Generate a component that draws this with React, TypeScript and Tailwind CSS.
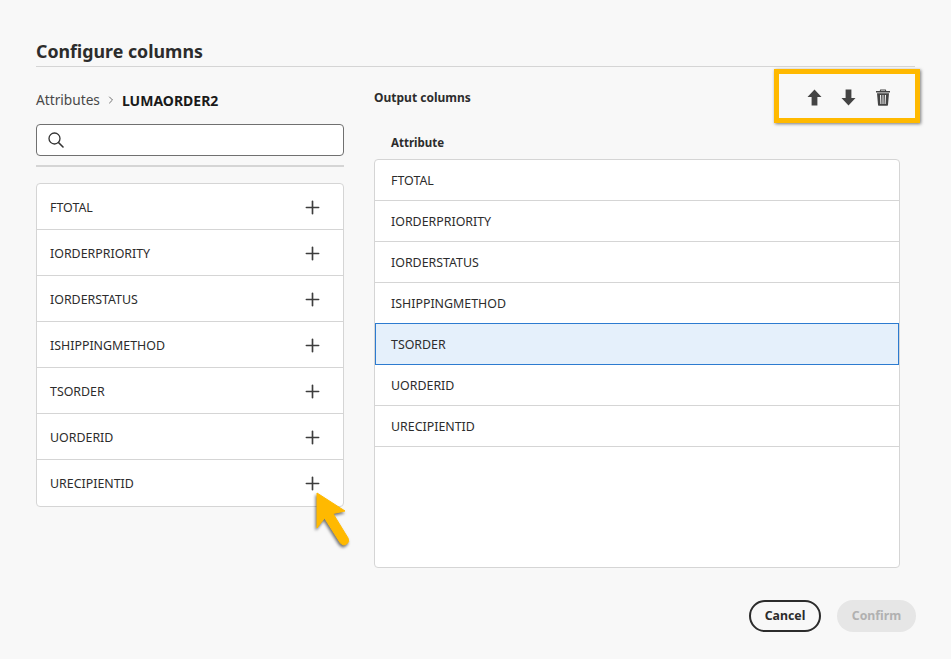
import { ChevronRight, Plus } from "lucide-react";

const attributes = [
  "FTOTAL",
  "IORDERPRIORITY",
  "IORDERSTATUS",
  "ISHIPPINGMETHOD",
  "TSORDER",
  "UORDERID",
  "URECIPIENTID",
];

const SearchIcon = () => (
  <svg width="16" height="16" viewBox="0 0 16 16" fill="none" stroke="#333" strokeWidth="1.3">
    <circle cx="6.5" cy="6.5" r="5.5" />
    <path d="M10.5 10.5 15 15" strokeLinecap="round" strokeWidth="1.6" />
  </svg>
);

const TrashIcon = () => (
  <svg width="16" height="17" viewBox="0 0 16 17" fill="#444">
    <path d="M5.2 0.6h5.6l.5 1.4h3.7v1.5H1V2h3.7zM6 1.5 5.8 2h4.4L10 1.5z" />
    <path d="M2 4.2h12l-1 11.6c0 .6-.5 1-1 1H4c-.5 0-1-.4-1-1zM5 6l.4 9h1L6.1 6zM7.5 6v9h1V6zM9.9 6l-.3 9h1l.4-9z" fillRule="evenodd" />
  </svg>
);

const UpIcon = () => (
  <svg width="15" height="17" viewBox="0 0 15 17" fill="#444">
    <path d="M7.5 0.5 14.5 8H10.4v8.5H4.6V8H.5z" />
  </svg>
);

const DownIcon = () => (
  <svg width="15" height="17" viewBox="0 0 15 17" fill="#444">
    <path d="M7.5 16.5 14.5 9H10.4V.5H4.6V9H.5z" />
  </svg>
);

const App = () => {
  return (
    <div className="relative flex h-[659px] w-[951px] flex-col overflow-hidden bg-[#f8f8f8] px-9 font-['Noto_Sans',sans-serif] text-[#2c2c2c]">
      <h1 className="mt-[38px] h-[29px] border-b border-[#d5d5d5] text-[17.8px] leading-[26px] font-bold">
        Configure columns
      </h1>

      <div className="flex">
        <div className="w-[308px]">
          <div className="mt-[23px] flex h-[20px] items-center text-[13.7px] text-[#484848]">
            <span>Attributes</span>
            <ChevronRight size={12} className="mx-[5px] text-[#707070]" />
            <span className="text-[14px] font-bold text-[#1a1a1a]">LUMAORDER2</span>
          </div>
          <div className="mt-[14px] flex h-[32px] items-center rounded-[4px] border border-[#707070] bg-white pl-[11px]">
            <SearchIcon />
          </div>
          <div className="mt-[9px] h-[2px] bg-[#d5d5d5]" />
          <ul className="mt-[16px] rounded-[4px] border border-[#d5d5d5] bg-white">
            {attributes.map((name, idx) => (
              <li
                key={name}
                className={`flex h-[46px] items-center justify-between border-b pt-[2px] pr-[20px] pl-[13px] text-[12.4px] ${
                  idx < attributes.length - 1 ? "border-[#d5d5d5]" : "border-transparent"
                }`}
              >
                <span className="mt-[1px]">{name}</span>
                <Plus size={21} strokeWidth={1.9} className="text-[#3d3d3d]" />
              </li>
            ))}
          </ul>
        </div>

        <div className="ml-[30px] w-[526px]">
          <div className="mt-[21px] h-[20px] text-[12px] leading-[20px] font-bold">Output columns</div>
          <div className="mt-[25px] h-[20px] pl-[17px] text-[11.5px] leading-[20px] font-bold">Attribute</div>
          <ul className="mt-[6px] h-[409px] rounded-[4px] border border-[#d5d5d5] bg-white">
            {attributes.map((name) => (
              <li
                key={name}
                className={
                  name === "TSORDER"
                    ? "-mt-px flex h-[42px] items-center border border-[#2c7bd0] bg-[#e5f0fb] pt-[3px] pl-[15px] text-[12.4px]"
                    : "flex h-[41px] items-center border-b border-[#d5d5d5] pt-[3px] pl-[16px] text-[12.4px]"
                }
              >
                {name}
              </li>
            ))}
          </ul>
        </div>
      </div>

      <div className="mt-[32px] -mr-px flex justify-end gap-4">
        <button className="h-[32px] w-[72px] rounded-full border-2 border-[#2c2c2c] text-[12.3px] font-bold">
          Cancel
        </button>
        <button className="h-[32px] w-[79px] rounded-full bg-[#e6e6e6] text-[12.3px] font-bold text-[#b1b1b1]">
          Confirm
        </button>
      </div>

      <div className="absolute top-[69px] left-[774px] flex h-[54px] w-[146px] items-center gap-[19px] border-[5px] border-[#ffb900] pt-[2px] pl-[28px] shadow-[1px_1px_3px_rgba(0,0,0,0.5)]">
        <UpIcon />
        <DownIcon />
        <TrashIcon />
      </div>

      <svg className="absolute top-[492px] left-[312px]" width="42" height="62" viewBox="0 0 42 62">
        <path
          d="M5 1 L33 19 L21 21.5 L36 46 Q38 50 34.5 52 Q31 54.5 28 50.5 L12.5 26 L5 36 Z"
          fill="#ffb900"
          stroke="#ffb900"
          strokeWidth="1"
          strokeLinejoin="round"
          style={{ filter: "drop-shadow(-1px 2px 1.5px rgba(0,0,0,0.55))" }}
        />
      </svg>
    </div>
  );
};

export default App;
